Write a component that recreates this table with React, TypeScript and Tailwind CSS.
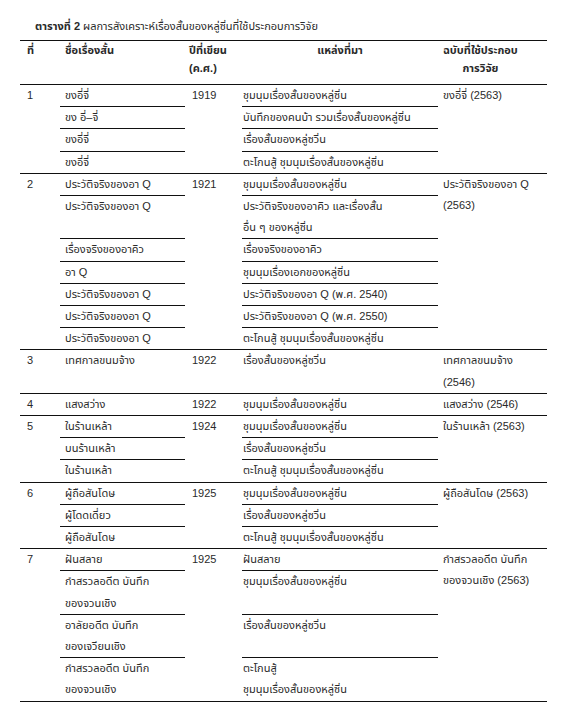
const ROW_START = [
  "row-start-1",
  "row-start-2",
  "row-start-3",
  "row-start-4",
  "row-start-5",
  "row-start-6",
  "row-start-7",
];

const ROW_SPAN: Record<number, string> = {
  1: "row-span-1",
  2: "row-span-2",
  3: "row-span-3",
  4: "row-span-4",
  5: "row-span-5",
  6: "row-span-6",
  7: "row-span-7",
};

const COLS = "grid grid-cols-[40px_125px_57px_196px_109px]";

type SubRow = { name: string[]; source: string[] };
type Group = { no: string; year: string; version: string[]; rows: SubRow[] };

const SHUMNUM = "ชุมนุมเรื่องสั้นของหลู่ซิ่น";
const SHORT = "เรื่องสั้นของหลู่ซวิ่น";
const TAKON = "ตะโกนสู้ ชุมนุมเรื่องสั้นของหลู่ซิ่น";
const AQ = "ประวัติจริงของอา Q";

const groups: Group[] = [
  {
    no: "1",
    year: "1919",
    version: ["ขงอี่จี่ (2563)"],
    rows: [
      { name: ["ขงอี่จี่"], source: [SHUMNUM] },
      { name: ["ขง อี่–จี่"], source: ["บันทึกของคนบ้า รวมเรื่องสั้นของหลู่ซิ่น"] },
      { name: ["ขงอี่จี่"], source: [SHORT] },
      { name: ["ขงอี่จี่"], source: [TAKON] },
    ],
  },
  {
    no: "2",
    year: "1921",
    version: [AQ, "(2563)"],
    rows: [
      { name: [AQ], source: [SHUMNUM] },
      { name: [AQ], source: ["ประวัติจริงของอาคิว และเรื่องสั้น", "อื่น ๆ ของหลู่ซิ่น"] },
      { name: ["เรื่องจริงของอาคิว"], source: ["เรื่องจริงของอาคิว"] },
      { name: ["อา Q"], source: ["ชุมนุมเรื่องเอกของหลู่ซิ่น"] },
      { name: [AQ], source: ["ประวัติจริงของอา Q (พ.ศ. 2540)"] },
      { name: [AQ], source: ["ประวัติจริงของอา Q (พ.ศ. 2550)"] },
      { name: [AQ], source: [TAKON] },
    ],
  },
  {
    no: "3",
    year: "1922",
    version: ["เทศกาลขนมจ้าง", "(2546)"],
    rows: [{ name: ["เทศกาลขนมจ้าง"], source: [SHORT] }],
  },
  {
    no: "4",
    year: "1922",
    version: ["แสงสว่าง (2546)"],
    rows: [{ name: ["แสงสว่าง"], source: [SHUMNUM] }],
  },
  {
    no: "5",
    year: "1924",
    version: ["ในร้านเหล้า (2563)"],
    rows: [
      { name: ["ในร้านเหล้า"], source: [SHUMNUM] },
      { name: ["บนร้านเหล้า"], source: [SHORT] },
      { name: ["ในร้านเหล้า"], source: [TAKON] },
    ],
  },
  {
    no: "6",
    year: "1925",
    version: ["ผู้ถือสันโดษ (2563)"],
    rows: [
      { name: ["ผู้ถือสันโดษ"], source: [SHUMNUM] },
      { name: ["ผู้โดดเดี่ยว"], source: [SHORT] },
      { name: ["ผู้ถือสันโดษ"], source: [TAKON] },
    ],
  },
  {
    no: "7",
    year: "1925",
    version: ["กำสรวลอดีต บันทึก", "ของจวนเชิง (2563)"],
    rows: [
      { name: ["ฝันสลาย"], source: ["ฝันสลาย"] },
      { name: ["กำสรวลอดีต บันทึก", "ของจวนเชิง"], source: [SHUMNUM] },
      { name: ["อาลัยอดีต บันทึก", "ของเจวียนเชิง"], source: [SHORT] },
      { name: ["กำสรวลอดีต บันทึก", "ของจวนเชิง"], source: ["ตะโกนสู้", SHUMNUM] },
    ],
  },
];

function Lines({ lines }: { lines: string[] }) {
  return (
    <>
      {lines.map((l, i) => (
        <div key={i} className="whitespace-nowrap">
          {l}
        </div>
      ))}
    </>
  );
}

function GroupRows({ g }: { g: Group }) {
  const n = g.rows.length;
  return (
    <div className={`${COLS} border-b border-[#111]`}>
      <div className={`col-start-1 row-start-1 ${ROW_SPAN[n]} pl-[7px]`}>{g.no}</div>
      <div className={`col-start-3 row-start-1 ${ROW_SPAN[n]} pl-[7px]`}>{g.year}</div>
      <div className={`col-start-5 row-start-1 ${ROW_SPAN[n]} pl-[5px]`}>
        <Lines lines={g.version} />
      </div>
      {g.rows.map((r, i) => {
        const last = i === n - 1;
        const line = last ? "" : "border-b border-[#111]";
        return [
          <div key={`n${i}`} className={`col-start-2 ${ROW_START[i]} pl-[5px] ${line}`}>
            <Lines lines={r.name} />
          </div>,
          <div key={`s${i}`} className={`col-start-4 ${ROW_START[i]} pl-[1px] ${line}`}>
            <Lines lines={r.source} />
          </div>,
        ];
      })}
    </div>
  );
}

export default function App() {
  return (
    <div className="w-[566px] h-[716px] bg-white text-[#2a2a2a] font-['Liberation_Sans','Noto_Sans_Thai','Noto_Sans_Thai_UI','Loma','Garuda',sans-serif] text-[11px] leading-[21.2px] overflow-hidden">
      <div className="pt-[17px] pl-[35px] h-[40px] leading-[18px]">
        <span className="font-bold">ตารางที่ 2</span> ผลการสังเคราะห์เรื่องสั้นของหลู่ซิ่นที่ใช้ประกอบการวิจัย
      </div>

      <div className="ml-[20px] w-[527px]">
        {/* header */}
        <div className={`${COLS} h-[45px] border-t border-b border-[#111] font-bold leading-[17.5px] pt-[1px]`}>
          <div className="pl-[7px]">ที่</div>
          <div className="pl-[5px]">ชื่อเรื่องสั้น</div>
          <div className="pl-[4px]">
            <div>ปีที่เขียน</div>
            <div>(ค.ศ.)</div>
          </div>
          <div className="text-center">แหล่งที่มา</div>
          <div className="pl-[5px]">
            <div className="inline-block text-center">
              <div>ฉบับที่ใช้ประกอบ</div>
              <div>การวิจัย</div>
            </div>
          </div>
        </div>

        {groups.map((g) => (
          <GroupRows key={g.no} g={g} />
        ))}
      </div>
    </div>
  );
}
